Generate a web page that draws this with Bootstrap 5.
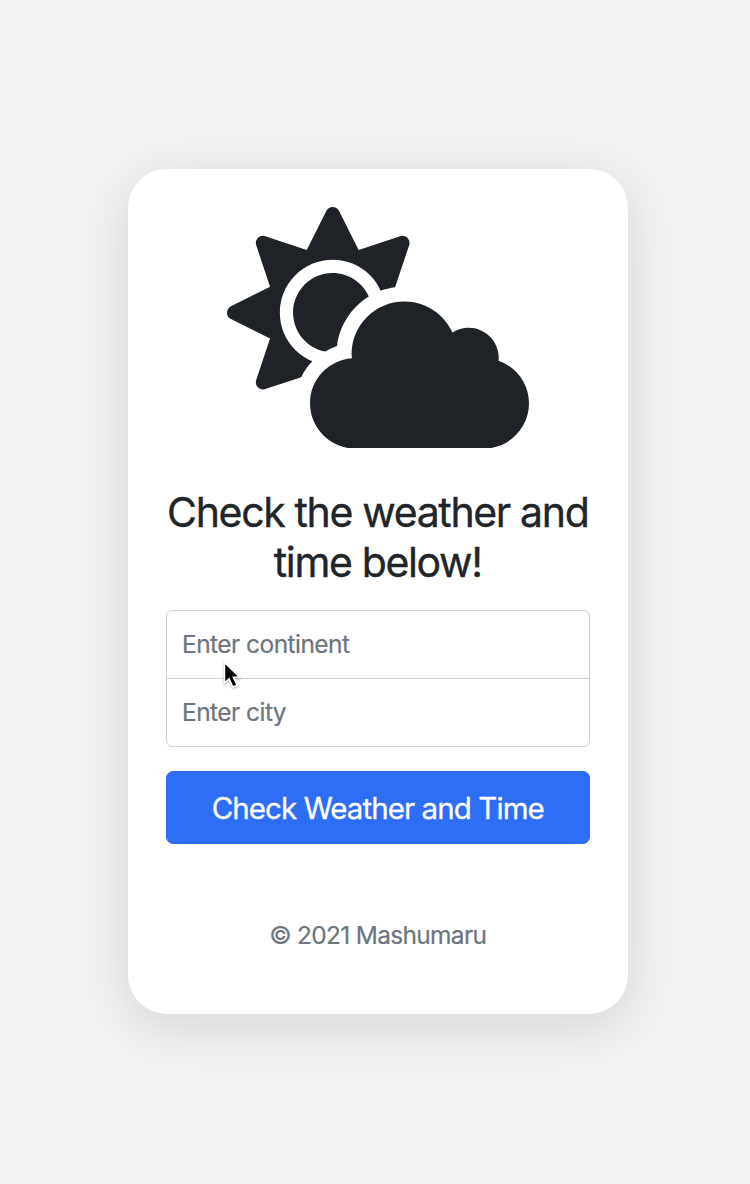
<!DOCTYPE html>
<html lang="en">
<head>
<meta charset="utf-8">
<meta name="viewport" content="width=device-width, initial-scale=1">
<title>Weather and Time</title>
<link href="https://cdn.jsdelivr.net/npm/bootstrap@5.3.0/dist/css/bootstrap.min.css" rel="stylesheet">
<style>
body { background: #f3f3f3; font-family: Inter, "Liberation Sans", sans-serif; color: #212529; }
.panel { width: 499.5px; height: 845px; margin-top: 169px; margin-left: 128px; padding: 37.5px 38px; border-radius: 39px; background: #fff; box-shadow: 0 12px 54px rgba(0,0,0,.125); }
.weather-icon { width: 302px; height: 241.6px; fill: #1f2327; }
.title { font-size: 41px; line-height: 50px; font-weight: 400; margin: 39px -10px 22.9px; letter-spacing: -1.35px; white-space: nowrap; -webkit-text-stroke: .35px currentColor; }
.field { height: 69px; padding: 0 15px; font-size: 24.5px; letter-spacing: -.55px; border: 1.5px solid #ced0d6; border-radius: 6px; -webkit-text-stroke: .2px #6c757d; }
.field::placeholder { color: #6c757d; opacity: 1; }
.field-top { border-bottom-left-radius: 0; border-bottom-right-radius: 0; margin-bottom: -1px; }
.field-end { border-top-left-radius: 0; border-top-right-radius: 0; }
.btn-check-now { --bs-btn-bg: #2e6df5; --bs-btn-border-color: #2e6df5; height: 73px; margin-top: 24px; font-size: 29.5px; letter-spacing: -.92px; border-radius: 7px; padding: 2px 0 0; -webkit-text-stroke: .3px #fff; }
.copy { margin: 73px 0 0; font-size: 24.5px; line-height: 36px; color: #6c757d; letter-spacing: -.7px; -webkit-text-stroke: .2px currentColor; }
.pointer { position: absolute; left: 54px; top: 50px; width: 24px; height: 32px; filter: drop-shadow(0 1px 1px rgba(0,0,0,.3)); z-index: 5; }
</style>
</head>
<body>
<div class="overflow-hidden vh-100">
<main class="panel text-center">
  <form>
    <svg class="weather-icon d-block mx-auto" viewBox="0 0 640 512" aria-hidden="true"><path d="M575.2 325.7c.2-1.9.8-3.7.8-5.6 0-35.3-28.7-64-64-64-12.6 0-24.2 3.8-34.1 10-17.6-38.8-56.5-66-101.9-66-61.8 0-112 50.1-112 112 0 3 .7 5.8.9 8.7-49.6 3.7-88.9 44.7-88.9 95.3 0 53 43 96 96 96h272c53 0 96-43 96-96 0-42.1-27.2-77.4-64.8-90.4zm-430.4-22.6c-43.7-43.7-43.7-114.7 0-158.3 43.7-43.7 114.7-43.7 158.4 0 9.7 9.7 16.9 20.9 22.3 32.7 9.8-3.7 20.1-6 30.7-7.5L386 81.1c4-11.9-7.3-23.1-19.2-19.2L279 91.2 237.5 8.4C232-2.8 216-2.8 210.4 8.4L169 91.2 81.1 61.9C69.3 58 58 69.3 61.9 81.1l29.3 87.8-82.8 41.5c-11.2 5.6-11.2 21.5 0 27.1l82.8 41.4-29.3 87.8c-4 11.9 7.3 23.1 19.2 19.2l76.1-25.3c6.1-12.4 14-23.7 23.6-33.5-13-5.4-25.4-13.4-36-24zm-4.8-79.2c0 40.8 29.3 74.8 67.9 82.3 8-4.7 16.3-8.8 25.2-11.7 5.4-44.3 31-82.5 67.4-105C287.3 160.4 258 140 224 140c-46.3 0-84 37.6-84 83.9z"/></svg>
    <h1 class="title">Check the weather and<br>time below!</h1>
    <div class="position-relative">
      <input type="text" class="form-control field field-top" placeholder="Enter continent" aria-label="Continent">
      <input type="text" class="form-control field field-end" placeholder="Enter city" aria-label="City">
      <svg class="pointer" viewBox="0 0 24 32" aria-hidden="true"><path d="M4.5 2.5v20.5l4.6-4.3 3.8 8.3 4.2-1.9-3.7-7.9h6.3z" fill="#000" stroke="#fff" stroke-width="1.5"/></svg>
    </div>
    <button type="button" class="btn btn-primary btn-check-now w-100">Check Weather and Time</button>
    <p class="copy">© 2021 Mashumaru</p>
  </form>
</main>
</div>
<script src="https://cdn.jsdelivr.net/npm/bootstrap@5.3.0/dist/js/bootstrap.bundle.min.js"></script>
</body>
</html>
